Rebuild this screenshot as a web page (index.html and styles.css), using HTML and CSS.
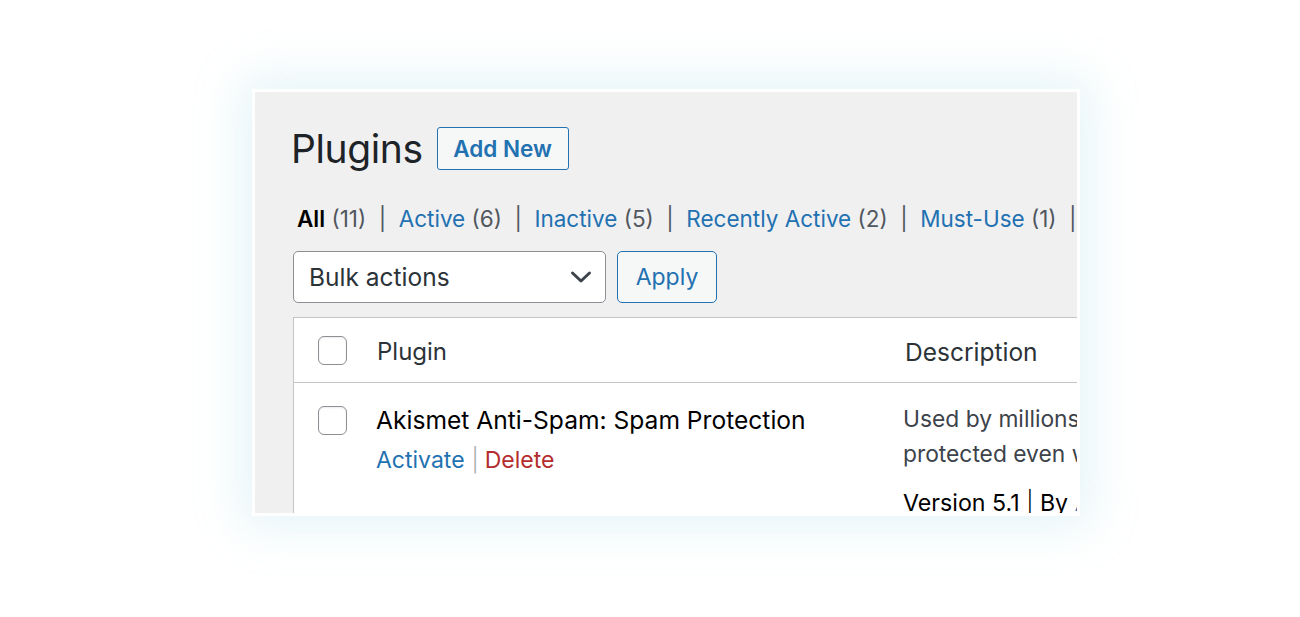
FILE: index.html
```html
<!DOCTYPE html>
<html lang="en">
<head>
<meta charset="utf-8">
<title>Plugins</title>
<link rel="stylesheet" href="styles.css">
</head>
<body>
<div class="stage">
  <div class="card">
    <div class="screen">
      <div class="head">
        <h1 class="title">Plugins</h1>
        <a class="btn-add">Add New</a>
      </div>
      <ul class="filters">
        <li><a class="current">All</a> <span class="count">(11)</span></li>
        <li class="sep">|</li>
        <li><a>Active</a> <span class="count">(6)</span></li>
        <li class="sep">|</li>
        <li><a>Inactive</a> <span class="count">(5)</span></li>
        <li class="sep">|</li>
        <li><a>Recently Active</a> <span class="count">(2)</span></li>
        <li class="sep">|</li>
        <li><a>Must-Use</a> <span class="count">(1)</span></li>
        <li class="sep">|</li>
      </ul>
      <div class="bulk">
        <div class="select">
          <span>Bulk actions</span>
          <svg class="chev" width="22" height="14" viewBox="0 0 22 14"><path d="M2.5 3 L11 11 L19.5 3" fill="none" stroke="#3c434a" stroke-width="3" stroke-linecap="round" stroke-linejoin="round"/></svg>
        </div>
        <a class="btn-apply">Apply</a>
      </div>
      <div class="table">
        <div class="thead">
          <div class="cb"><span class="box"></span></div>
          <div class="col-name">Plugin</div>
          <div class="col-desc">Description</div>
        </div>
        <div class="row">
          <div class="cb"><span class="box"></span></div>
          <div class="col-name">
            <div class="pname">Akismet Anti-Spam: Spam Protection</div>
            <div class="actions"><a class="act">Activate</a><span class="bar">|</span><a class="del">Delete</a></div>
          </div>
          <div class="col-desc">
            <p class="desc"><span>Used by millions, Akismet is quite possibly the best way in the world to protect your blog from spam.</span><span>protected even while you sleep.</span></p>
            <p class="meta">Version 5.1 <span class="pipe">|</span> By <a>Automattic</a></p>
          </div>
        </div>
      </div>
    </div>
  </div>
</div>
</body>
</html>
```

FILE: styles.css
```css
* { box-sizing: border-box; }
html, body { margin: 0; padding: 0; background: #ffffff; }
body { font-family: Inter, "Noto Sans", sans-serif; color: #1d2327; }

.stage { padding: 89px 0 0 252px; height: 617px; }

.card {
  width: 828px;
  height: 427px;
  border: 3px solid #ffffff;
  background: #ffffff;
  box-shadow: 0 0 44px 10px rgba(150, 212, 228, 0.26);
}

.screen {
  width: 100%;
  height: 100%;
  overflow: hidden;
  background: #f0f0f1;
  padding: 35px 0 0 38px;
}

.head { display: flex; align-items: center; gap: 14px; height: 43px; }
.title {
  margin: 0 0 0 -2px;
  font-size: 39px;
  font-weight: 400;
  letter-spacing: -0.4px;
  color: #1d2327;
  line-height: 43px;
}
.btn-add {
  display: flex; align-items: center; justify-content: center;
  width: 132px; height: 43px;
  border: 1px solid #2271b1; border-radius: 3px;
  background: #f6f7f7; color: #2271b1;
  font-size: 22.5px; font-weight: 600;
}

.filters {
  list-style: none; margin: 34px 0 0 4px; padding: 0;
  display: flex; white-space: nowrap;
  font-size: 22.5px; line-height: 30px;
  color: #50575e;
}
.filters li { flex: none; }
.filters a { color: #2271b1; }
.filters a.current { color: #000; font-weight: 600; }
.filters .count { color: #50575e; }
.filters .sep { margin: 0 12.5px; color: #50575e; }

.bulk { display: flex; gap: 11px; margin-top: 17px; }
.select {
  width: 313px; height: 52px;
  display: flex; align-items: center; justify-content: space-between;
  padding: 0 13px 0 15px;
  background: #fff; border: 1px solid #8c8f94; border-radius: 5px;
  font-size: 24.5px; color: #2c3338;
}
.btn-apply {
  width: 100px; height: 52px;
  display: flex; align-items: center; justify-content: center;
  border: 1px solid #2271b1; border-radius: 5px;
  background: #f6f7f7; color: #2271b1; font-size: 23px;
}

.table {
  width: 1100px; margin-top: 14px;
  background: #fff;
  border: 1px solid #c3c4c7; border-right: none;
}
.thead, .row { display: grid; grid-template-columns: 83px 528px 1fr; }
.thead {
  height: 65px; align-items: center;
  border-bottom: 1px solid #c3c4c7;
  font-size: 24px; color: #2c3338;
}
.cb { padding-left: 24px; }
.box {
  display: block; width: 29px; height: 29px;
  border: 1px solid #8c8f94; border-radius: 6px; background: #fff;
  box-shadow: inset 0 1px 2px rgba(0, 0, 0, 0.08);
}
.thead .col-name, .thead .col-desc { padding-top: 3px; }
.thead .col-desc { font-size: 24.5px; }

.row { height: 200px; }
.row .cb { padding-top: 23px; }
.row .col-name { padding-top: 22px; margin-left: -1px; }
.pname { font-size: 24.6px; line-height: 30px; color: #000; white-space: nowrap; }
.actions { margin-top: 10px; font-size: 23px; line-height: 30px; white-space: nowrap; }
.act { color: #2271b1; }
.bar { color: #a7aaad; margin: 0 6px 0 7px; font-weight: 300; }
.del { color: #b32d2e; }

.row .col-desc { padding-top: 18px; margin-left: -2px; }
.desc { margin: 0; font-size: 22.8px; line-height: 35px; color: #3c434a; white-space: nowrap; }
.desc span { display: block; }
.meta { margin: 15px 0 0; font-size: 23.2px; line-height: 35px; color: #000; white-space: nowrap; }
.meta .pipe { font-weight: 300; }
.meta a { color: #2271b1; }
```
